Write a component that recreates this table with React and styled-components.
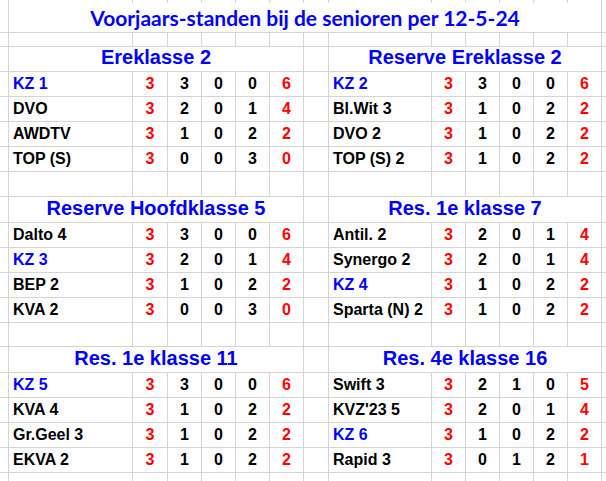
import React from "react";
import styled, { createGlobalStyle } from "styled-components";

const GlobalStyle = createGlobalStyle`
  html, body {
    margin: 0;
    padding: 0;
    background: #fff;
  }
  body {
    width: 606px;
    height: 481px;
    overflow: hidden;
  }
`;

const Sheet = styled.div`
  display: grid;
  grid-template-columns: 8px 123px 34px 33px 33px 33px 33px 24px 102px 33px 33px 33px 33px 33px 6px;
  grid-template-rows:
    3px 28px 13px
    24px 24px 24px 24px 24px
    24px
    25px 24px 24px 24px 24px
    23px
    25px 24px 24px 24px 24px
    20px;
  gap: 1px;
  background: #d4d4d4;
  width: 606px;
  height: 481px;
  overflow: hidden;
`;

const Cell = styled.div`
  background: #fff;
  display: flex;
  align-items: flex-end;
  grid-column: span ${(props) => props.$span || 1};
  grid-row: span ${(props) => props.$rows || 1};
  min-width: 0;
  white-space: nowrap;
`;

const Title = styled(Cell)`
  margin-top: -1px;
  justify-content: center;
  padding-bottom: 2px;
  font-family: Lato, "Liberation Sans", sans-serif;
  font-weight: 700;
  font-size: 21px;
  color: #0000ff;
`;

const Heading = styled(Cell)`
  justify-content: center;
  padding-bottom: 2px;
  font-family: "Liberation Sans", Arial, sans-serif;
  font-weight: 700;
  font-size: 20px;
  color: #0000ff;
`;

const Name = styled(Cell)`
  padding: 0 0 3px 4px;
  font-family: "Liberation Sans", Arial, sans-serif;
  font-weight: 700;
  font-size: 16px;
  color: ${(props) => (props.$club ? "#0000ff" : "#000")};
`;

const Num = styled(Cell)`
  justify-content: center;
  padding-bottom: 3px;
  font-family: "Liberation Sans", Arial, sans-serif;
  font-weight: 700;
  font-size: 16px;
  color: ${(props) => (props.$red ? "#ff0000" : "#000")};
`;

const sections = [
  [
    {
      title: "Ereklasse 2",
      rows: [
        ["KZ 1", 3, 3, 0, 0, 6],
        ["DVO", 3, 2, 0, 1, 4],
        ["AWDTV", 3, 1, 0, 2, 2],
        ["TOP (S)", 3, 0, 0, 3, 0],
      ],
    },
    {
      title: "Reserve Ereklasse 2",
      rows: [
        ["KZ 2", 3, 3, 0, 0, 6],
        ["Bl.Wit 3", 3, 1, 0, 2, 2],
        ["DVO 2", 3, 1, 0, 2, 2],
        ["TOP (S) 2", 3, 1, 0, 2, 2],
      ],
    },
  ],
  [
    {
      title: "Reserve Hoofdklasse 5",
      rows: [
        ["Dalto 4", 3, 3, 0, 0, 6],
        ["KZ 3", 3, 2, 0, 1, 4],
        ["BEP 2", 3, 1, 0, 2, 2],
        ["KVA 2", 3, 0, 0, 3, 0],
      ],
    },
    {
      title: "Res. 1e klasse 7",
      rows: [
        ["Antil. 2", 3, 2, 0, 1, 4],
        ["Synergo 2", 3, 2, 0, 1, 4],
        ["KZ 4", 3, 1, 0, 2, 2],
        ["Sparta (N) 2", 3, 1, 0, 2, 2],
      ],
    },
  ],
  [
    {
      title: "Res. 1e klasse 11",
      rows: [
        ["KZ 5", 3, 3, 0, 0, 6],
        ["KVA 4", 3, 1, 0, 2, 2],
        ["Gr.Geel 3", 3, 1, 0, 2, 2],
        ["EKVA 2", 3, 1, 0, 2, 2],
      ],
    },
    {
      title: "Res. 4e klasse 16",
      rows: [
        ["Swift 3", 3, 2, 1, 0, 5],
        ["KVZ'23 5", 3, 2, 0, 1, 4],
        ["KZ 6", 3, 1, 0, 2, 2],
        ["Rapid 3", 3, 0, 1, 2, 1],
      ],
    },
  ],
];

const blankRow = (key) =>
  Array.from({ length: 15 }, (_, i) => <Cell key={`${key}-${i}`} />);

const TeamCells = ({ team }) => {
  const [name, ...nums] = team;
  return (
    <>
      <Name $club={name.startsWith("KZ ")}>{name}</Name>
      {nums.map((n, i) => (
        <Num key={i} $red={i === 0 || i === 4}>
          {n}
        </Num>
      ))}
    </>
  );
};

const Section = ({ pair, idx }) => (
  <>
    <Cell />
    <Heading $span={6}>{pair[0].title}</Heading>
    <Cell />
    <Heading $span={6}>{pair[1].title}</Heading>
    <Cell />
    {pair[0].rows.map((team, r) => (
      <React.Fragment key={`${idx}-${r}`}>
        <Cell />
        <TeamCells team={team} />
        <Cell />
        <TeamCells team={pair[1].rows[r]} />
        <Cell />
      </React.Fragment>
    ))}
  </>
);

export default function App() {
  return (
    <>
      <GlobalStyle />
      <Sheet>
        {/* kop: bovenste strookje met rasterlijnen, dan de samengevoegde titel */}
        <Cell $rows={2} />
        {Array.from({ length: 13 }, (_, i) => (
          <Cell key={`top-${i}`} />
        ))}
        <Cell $rows={2} />
        <Title $span={13}>Voorjaars-standen bij de senioren per 12-5-24</Title>
        {blankRow("gap0")}

        <Section pair={sections[0]} idx={0} />
        {blankRow("gap1")}
        <Section pair={sections[1]} idx={1} />
        {blankRow("gap2")}
        <Section pair={sections[2]} idx={2} />
        {blankRow("end")}
      </Sheet>
    </>
  );
}
